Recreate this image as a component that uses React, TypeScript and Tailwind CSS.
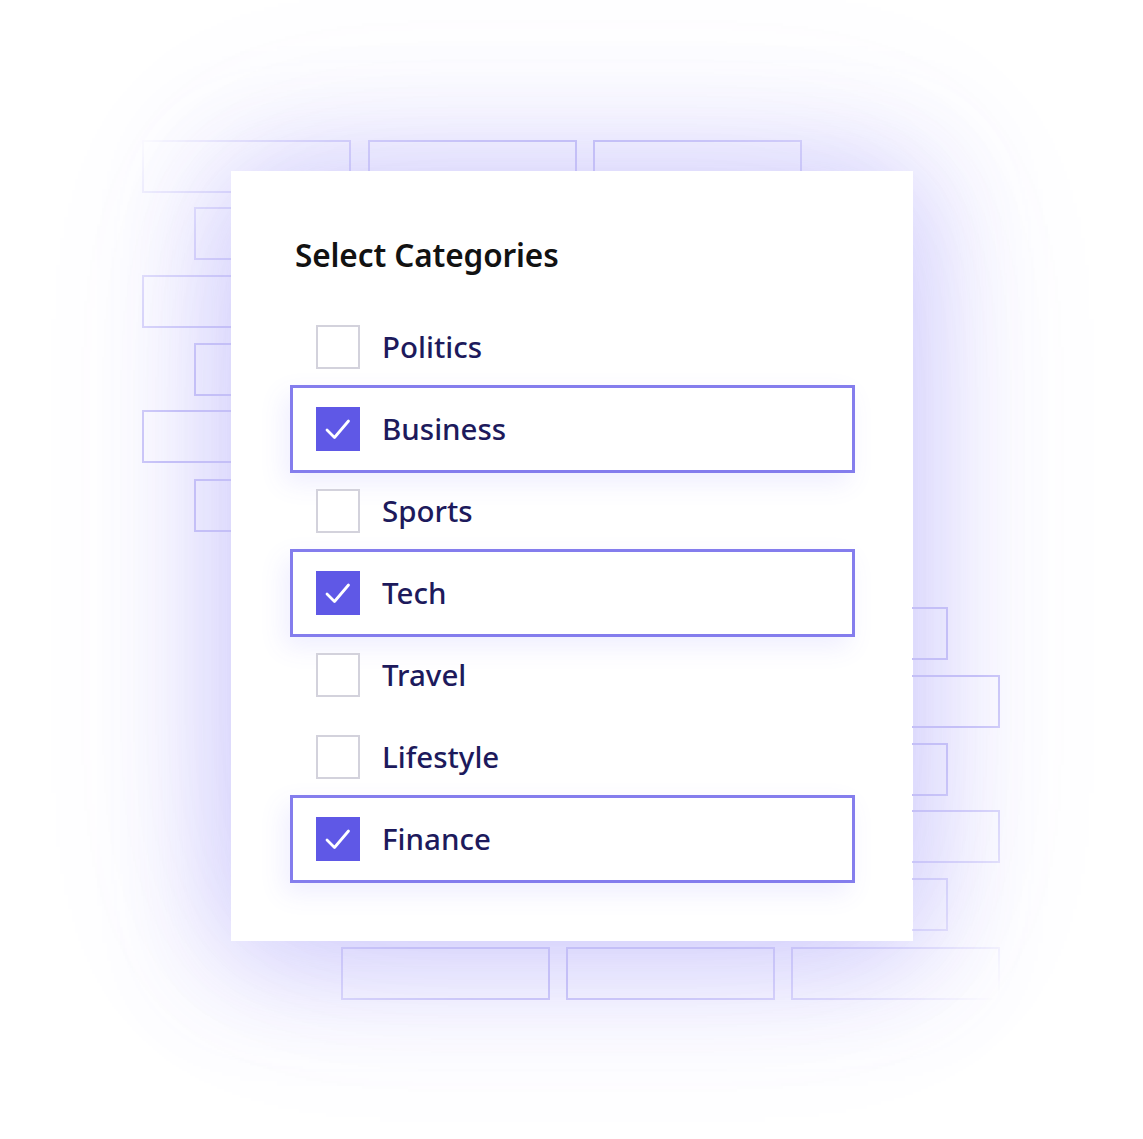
import React from 'react';

type Brick = { x: number; y: number; w: number };

// decorative brick outlines behind the card
const bricks: Brick[] = [
  { x: 142, y: 140, w: 209 },
  { x: 368, y: 140, w: 209 },
  { x: 593, y: 140, w: 209 },
  { x: 194, y: 207, w: 209 },
  { x: 142, y: 275, w: 209 },
  { x: 194, y: 343, w: 209 },
  { x: 142, y: 410, w: 209 },
  { x: 194, y: 479, w: 209 },
  { x: 739, y: 607, w: 209 },
  { x: 791, y: 675, w: 209 },
  { x: 739, y: 743, w: 209 },
  { x: 791, y: 810, w: 209 },
  { x: 739, y: 878, w: 209 },
  { x: 341, y: 947, w: 209 },
  { x: 566, y: 947, w: 209 },
  { x: 791, y: 947, w: 209 },
];

const categories = [
  { name: 'Politics', checked: false },
  { name: 'Business', checked: true },
  { name: 'Sports', checked: false },
  { name: 'Tech', checked: true },
  { name: 'Travel', checked: false },
  { name: 'Lifestyle', checked: false },
  { name: 'Finance', checked: true },
];

function Checkbox({ checked }: { checked: boolean }) {
  if (checked) {
    return (
      <div className="w-[44px] h-[44px] bg-[#5f58e6] flex items-center justify-center shrink-0">
        <svg width="44" height="44" viewBox="0 0 44 44" fill="none">
          <polyline
            points="11,23 18.5,30.5 32.5,14"
            stroke="white"
            strokeWidth="2.8"
            strokeLinecap="round"
            strokeLinejoin="round"
          />
        </svg>
      </div>
    );
  }
  return <div className="w-[44px] h-[44px] bg-white border-2 border-[#d3d2dc] shrink-0" />;
}

export default function App() {
  return (
    <div
      className="relative w-[1143px] h-[1139px] bg-white overflow-hidden"
      style={{ fontFamily: '"Noto Sans", Inter, sans-serif' }}
    >
      {/* soft glow */}
      <div className="absolute left-[232px] top-[171px] w-[681px] h-[770px] shadow-[0_10px_110px_10px_rgba(112,100,245,0.32),0_0_190px_0_rgba(120,110,245,0.12)]" />

      {/* bricks */}
      <div className="absolute inset-0 [mask-image:radial-gradient(circle_at_572px_560px,black_420px,transparent_610px)]">
        {bricks.map((b, i) => (
          <div
            key={i}
            className="absolute h-[53px] border-[2.5px] border-[#c4bff7]"
            style={{ left: b.x, top: b.y, width: b.w }}
          />
        ))}
      </div>

      <div className="relative pt-[171px] flex justify-center">
        <div className="w-[681px] h-[770px] bg-white pl-[59px] pr-[57px] pt-[62px]">
          <h2 className="pl-[5px] text-[31.5px] leading-[44px] font-semibold text-[#121212] tracking-[-0.1px]">
            Select Categories
          </h2>
          <div className="mt-[29px] flex flex-col">
            {categories.map((c) => (
              <div key={c.name} className="relative h-[82px] flex items-center pl-[26px]">
                {c.checked && (
                  <div className="absolute left-0 right-0 -top-[3px] -bottom-[3px] border-[3px] border-[#847ded] shadow-[-6px_10px_24px_rgba(99,91,255,0.10)]" />
                )}
                <div className="relative flex items-center gap-[22px]">
                  <Checkbox checked={c.checked} />
                  <span className="text-[29.5px] font-medium text-[#1d1a5c] leading-none">{c.name}</span>
                </div>
              </div>
            ))}
          </div>
        </div>
      </div>
    </div>
  );
}
